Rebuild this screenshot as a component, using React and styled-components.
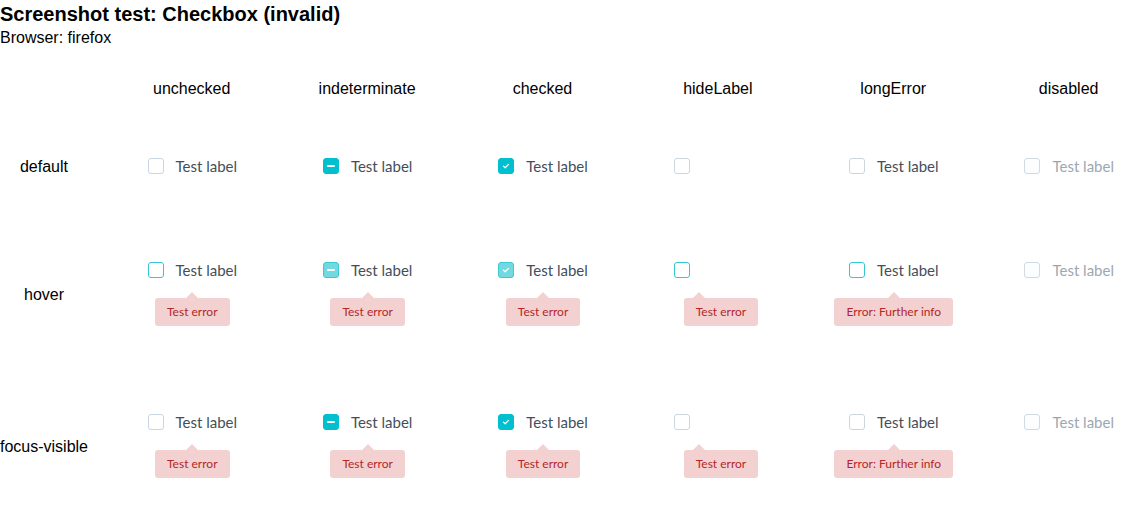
import styled, { createGlobalStyle, css } from "styled-components";

const GlobalStyle = createGlobalStyle`
  html, body {
    margin: 0;
    padding: 0;
    background: #fff;
    overflow: hidden;
  }
  body {
    font-family: "Liberation Sans", Arial, sans-serif;
    color: #000;
  }
`;

const Title = styled.h1`
  margin: 0;
  font-size: 20px;
  line-height: 28px;
  font-weight: bold;
`;

const Subtitle = styled.div`
  font-size: 16px;
  line-height: 19px;
`;

const Table = styled.div`
  display: grid;
  grid-template-columns: 104px repeat(6, 175.4px);
`;

const HeadCell = styled.div`
  font-size: 16px;
  line-height: 18px;
  text-align: center;
  padding: 33px 0 16px;
`;

const RowLabel = styled.div`
  font-size: 16px;
  line-height: 18px;
  white-space: nowrap;
  display: flex;
  align-items: center;
  justify-content: center;
  padding: 1px 16px 0 0;
`;

const Cell = styled.div`
  display: flex;
  flex-direction: column;
  align-items: flex-start;
  padding: 42px 0 42px 43.5px;
`;

const Wrapper = styled.div`
  display: inline-flex;
  flex-direction: column;
`;

const TipRow = styled.div`
  display: flex;
  width: 0;
  min-width: 100%;
  justify-content: ${(p) => (p.$hideLabel ? "flex-start" : "center")};
`;

const Field = styled.label`
  display: inline-flex;
  align-items: center;
  gap: 12px;
  height: 20px;
  font-family: Lato, "Noto Sans", sans-serif;
  font-size: 15px;
  color: ${(p) => (p.$disabled ? "#9ea7b1" : "#444e5a")};
`;

const Box = styled.span`
  width: 16px;
  height: 16px;
  box-sizing: border-box;
  border-radius: 3px;
  border: 1px solid #c9d6e1;
  background: #fff;
  display: flex;
  align-items: center;
  justify-content: center;
  ${(p) =>
    p.$filled &&
    css`
      background: #00bfcf;
      border-color: #00bfcf;
    `}
  ${(p) =>
    p.$hover &&
    !p.$filled &&
    css`
      border-color: #36c6d3;
    `}
  ${(p) =>
    p.$hover &&
    p.$filled &&
    css`
      background: #72d9e1;
      border-color: #3cc8d4;
    `}
  ${(p) =>
    p.$disabled &&
    css`
      border-color: #cfdae3;
      background: #fcfdfe;
    `}
`;

const Dash = styled.span`
  width: 8px;
  height: 2px;
  border-radius: 1px;
  background: #fff;
`;

const Tooltip = styled.div`
  position: relative;
  flex-shrink: 0;
  margin: 18px 0 2px ${(p) => (p.$hideLabel ? "10px" : "0")};
  height: 28px;
  padding: 0 12px;
  border-radius: 3px;
  background: #f3d1d0;
  color: #b4262a;
  font-family: Lato, "Noto Sans", sans-serif;
  font-size: 12px;
  line-height: 28px;
  white-space: nowrap;
  &::before {
    content: "";
    position: absolute;
    top: -6px;
    left: ${(p) => (p.$hideLabel ? "15px" : "50%")};
    margin-left: -6px;
    border-left: 6px solid transparent;
    border-right: 6px solid transparent;
    border-bottom: 6px solid #f3d1d0;
  }
`;

const Check = () => (
  <svg width="8" height="8" viewBox="0 0 8 8">
    <path
      d="M1.5 4.2 L3.2 5.8 L6.5 2.4"
      fill="none"
      stroke="#fff"
      strokeWidth="1.3"
      strokeLinecap="round"
      strokeLinejoin="round"
    />
  </svg>
);

const columns = [
  { key: "unchecked", error: "Test error" },
  { key: "indeterminate", error: "Test error", indeterminate: true },
  { key: "checked", error: "Test error", checked: true },
  { key: "hideLabel", error: "Test error", hideLabel: true },
  { key: "longError", error: "Error: Further info" },
  { key: "disabled", disabled: true },
];

const rows = [
  { key: "default", showError: false },
  { key: "hover", showError: true, hover: true },
  { key: "focus-visible", showError: true },
];

const Checkbox = ({ col, row }) => {
  const filled = col.checked || col.indeterminate;
  const hover = row.hover && !col.disabled;
  return (
    <Wrapper>
      <Field $disabled={col.disabled}>
        <Box $filled={filled} $hover={hover} $disabled={col.disabled}>
          {col.checked && <Check />}
          {col.indeterminate && <Dash />}
        </Box>
        {!col.hideLabel && "Test label"}
      </Field>
      {row.showError && col.error && (
        <TipRow $hideLabel={col.hideLabel}>
          <Tooltip $hideLabel={col.hideLabel}>{col.error}</Tooltip>
        </TipRow>
      )}
    </Wrapper>
  );
};

const App = () => (
  <>
    <GlobalStyle />
    <Title>Screenshot test: Checkbox (invalid)</Title>
    <Subtitle>Browser: firefox</Subtitle>
    <Table>
      <HeadCell />
      {columns.map((c) => (
        <HeadCell key={c.key}>{c.key}</HeadCell>
      ))}
      {rows.map((r) => [
        <RowLabel key={r.key}>{r.key}</RowLabel>,
        ...columns.map((c) => (
          <Cell key={r.key + c.key}>
            <Checkbox col={c} row={r} />
          </Cell>
        )),
      ])}
    </Table>
  </>
);

export default App;
